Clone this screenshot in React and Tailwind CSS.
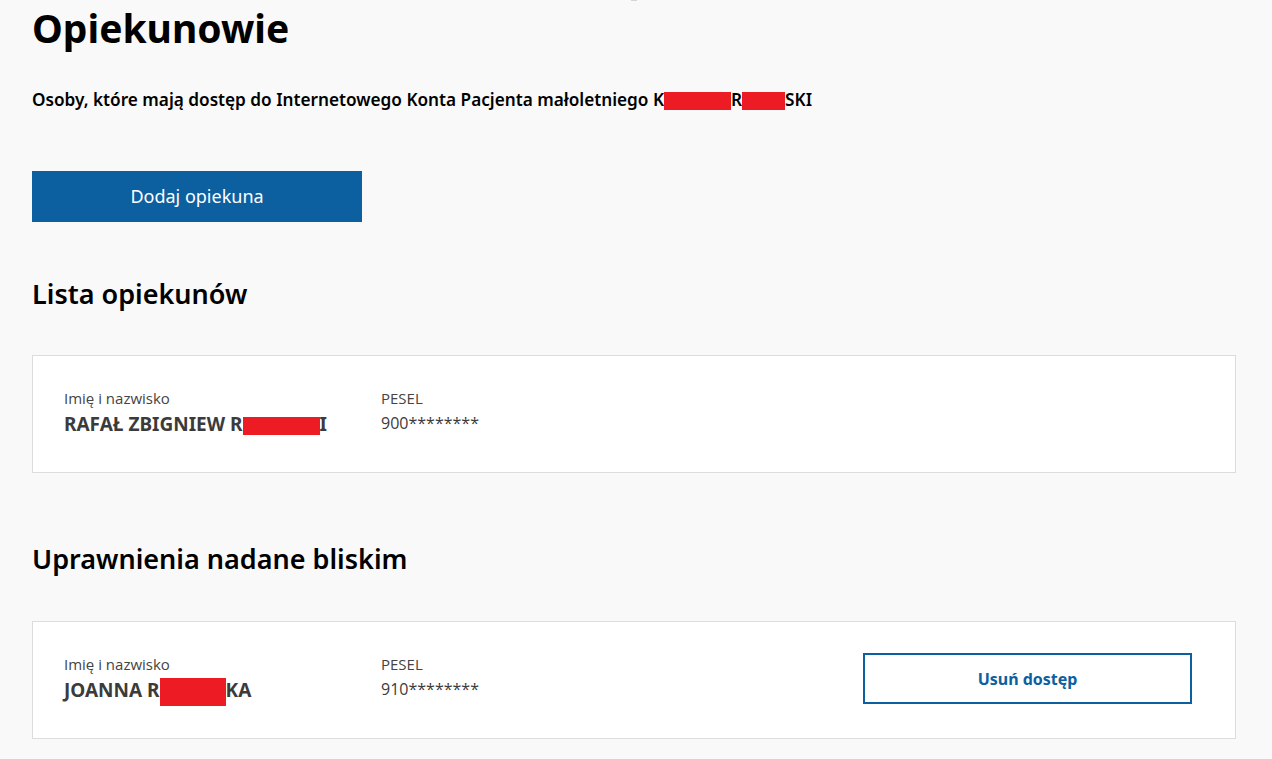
import React from 'react';

const heading = { fontFamily: '"Noto Sans", "Open Sans", sans-serif' };
const body = { fontFamily: '"Open Sans", sans-serif' };

function Redacted({ w, h = 'h-[18px]' }) {
  return <span className={`inline-block align-middle bg-[#ed1c24] ${w} ${h}`} />;
}

function PersonCard({ name, pesel, action }) {
  return (
    <div className="flex h-[118px] items-start justify-between border border-[#dcdcdc] bg-white pl-[31px] pr-[43px]">
      <div className="flex pt-[32px]">
        <div className="w-[317px]">
          <div className="text-[15px] leading-[20px] text-[#444]" style={body}>
            Imię i nazwisko
          </div>
          <div className="mt-[3px] text-[19px] font-bold leading-[26px] text-[#3b3b3b]" style={heading}>
            {name}
          </div>
        </div>
        <div>
          <div className="text-[15px] leading-[20px] text-[#444]" style={body}>
            PESEL
          </div>
          <div className="mt-[2px] text-[16px] leading-[26px] text-[#3b3b3b]" style={body}>
            {pesel}
          </div>
        </div>
      </div>
      {action}
    </div>
  );
}

export default function App() {
  return (
    <div className="relative min-h-screen bg-[#f9f9f9] pl-8 pr-9 pt-[4px] pb-10 text-black" style={heading}>
      <div className="absolute left-[631px] top-0 h-px w-[6px] bg-[#d5d5d5]" />

      <h1 className="text-[39px] font-bold leading-[48px]">Opiekunowie</h1>

      <p className="mt-[37px] text-[17.2px] font-semibold leading-[22px]">
        Osoby, które mają dostęp do Internetowego Konta Pacjenta małoletniego K
        <Redacted w="w-[67px]" />R<Redacted w="w-[43px]" />SKI
      </p>

      <button
        type="button"
        className="mt-[60px] h-[51px] w-[330px] bg-[#0c60a0] text-[18px] text-white"
      >
        Dodaj opiekuna
      </button>

      <h2 className="mt-[54px] text-[27px] font-semibold leading-[36px]">Lista opiekunów</h2>

      <div className="mt-[43px]">
        <PersonCard
          name={<>RAFAŁ ZBIGNIEW R<Redacted w="w-[77px]" />I</>}
          pesel="900********"
        />
      </div>

      <h2 className="mt-[68px] text-[27px] font-semibold leading-[36px]">Uprawnienia nadane bliskim</h2>

      <div className="mt-[44px]">
        <PersonCard
          name={<>JOANNA R<Redacted w="w-[66px]" h="h-[28px]" />KA</>}
          pesel="910********"
          action={
            <button
              type="button"
              className="mt-[31px] h-[51px] w-[329px] border-2 border-[#0c60a0] bg-white text-[16px] font-bold text-[#0c60a0]"
            >
              Usuń dostęp
            </button>
          }
        />
      </div>
    </div>
  );
}
